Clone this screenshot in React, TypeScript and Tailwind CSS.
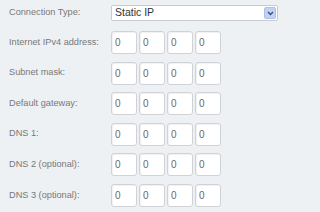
import React from 'react';

const rows = [
  'Internet IPv4 address:',
  'Subnet mask:',
  'Default gateway:',
  'DNS 1:',
  'DNS 2 (optional):',
  'DNS 3 (optional):',
];

function OctetBox() {
  return (
    <div className="w-[26px] h-[23px] bg-white border border-[#cfd2d6] rounded-[3px] shadow-[inset_1px_1px_1px_rgba(0,0,0,0.06)] flex items-center pl-[3px] text-[10px] text-[#6a6a6a]">
      0
    </div>
  );
}

export default function App() {
  return (
    <div
      className="w-[320px] h-[212px] bg-[#eef1f4] overflow-hidden"
      style={{ fontFamily: '"Liberation Sans", Arial, sans-serif' }}
    >
      <div className="flex items-center h-[16px] mt-[5px]">
        <span className="w-[111px] pl-[9px] text-[9.2px] text-[#787878]">Connection Type:</span>
        <div className="w-[167px] h-[16px] bg-white border border-[#c8ccd2] rounded-[2px] flex items-center justify-between pl-[3px] pr-[1px]">
          <span className="text-[10.5px] text-[#333]">Static IP</span>
          <div className="w-[12px] h-[12px] bg-[#c3d1f3] rounded-[2px] border border-[#aebfe8] flex items-center justify-center">
            <svg width="7" height="5" viewBox="0 0 7 5">
              <path d="M1 1 L3.5 3.5 L6 1" fill="none" stroke="#3a4f8a" strokeWidth="1.4" />
            </svg>
          </div>
        </div>
      </div>
      <div className="flex flex-col gap-[7.6px] mt-[10px]">
        {rows.map(label => (
          <div key={label} className="flex items-center h-[23px]">
            <span className="w-[111px] pl-[9px] text-[9.2px] text-[#787878] whitespace-nowrap">{label}</span>
            <div className="flex gap-[2px]">
              <OctetBox />
              <OctetBox />
              <OctetBox />
              <OctetBox />
            </div>
          </div>
        ))}
      </div>
    </div>
  );
}
